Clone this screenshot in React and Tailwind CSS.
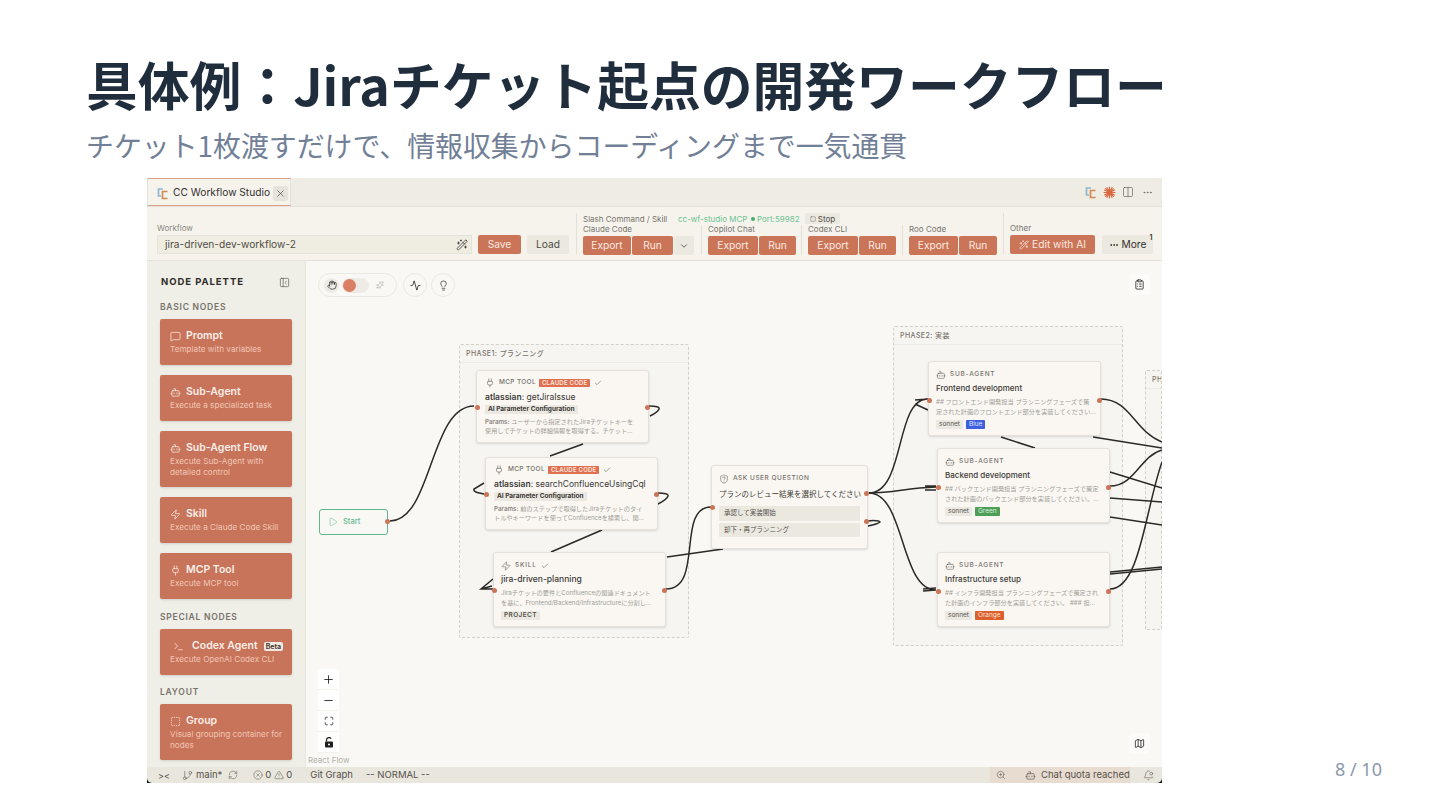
import React from 'react';
import {
  Activity, Bot, Check, ChevronDown, CircleX, ClipboardList, Columns2, Ellipsis, Hand, Lightbulb,
  Map as MapIcon, Maximize, MessageSquare, Minus, PanelLeftClose, Play, Plug, Plus, RefreshCw,
  ShieldQuestion, Sparkles, Square, SquareDashed, Terminal, TriangleAlert, WandSparkles, X, Zap, ZoomIn,
  BellDot, GitBranch,
} from 'lucide-react';

const ui = "font-['Inter','Noto_Sans_CJK_JP',sans-serif]";

const CcLogo = () => (
  <svg width="13" height="13" viewBox="0 0 13 13" fill="none" strokeWidth="1.7">
    <path d="M7 2H2.5v7H5" stroke="#8fb8cf" />
    <path d="M11.5 4.5H6.5v7h5" stroke="#d08a52" />
  </svg>
);

const ClaudeMark = () => (
  <svg width="13" height="13" viewBox="0 0 13 13" stroke="#d9673f" strokeWidth="1.1" strokeLinecap="round">
    <path d="M6.5 1v11M1 6.5h11M2.6 2.6l7.8 7.8M10.4 2.6l-7.8 7.8M4 1.5l5 10M9 1.5l-5 10M1.5 4l10 5M11.5 4l-10 5" />
  </svg>
);

const LockIcon = () => (
  <svg width="10" height="11" viewBox="0 0 10 11">
    <path d="M2.5 4.5V3a2.5 2.5 0 0 1 4.6-1.3" fill="none" stroke="#1f1e1c" strokeWidth="1.2" />
    <rect x="1" y="4.5" width="8" height="6" rx="1" fill="#1f1e1c" />
    <circle cx="5" cy="7.5" r="1" fill="#fff" />
  </svg>
);

const Btn = ({ className = '', children }) => (
  <div className={`flex h-[19px] items-center justify-center rounded-[2px] bg-[#cb7558] text-[10.2px] text-[#fbe9e1] ${className}`}>{children}</div>
);

const ExportRun = ({ label, exportW, runW, className = '' }) => (
  <div className={`flex flex-col ${className}`}>
    <div className="mb-[1px] h-[11px] text-[8px] leading-[11px] text-[#77736c]">{label}</div>
    <div className="flex gap-px">
      <Btn className={exportW}>Export</Btn>
      <Btn className={runW}>Run</Btn>
    </div>
  </div>
);

const Divider = ({ className = '' }) => <div className={`w-px self-stretch bg-[#e4e0d6] ${className}`} />;

const Toolbar = () => (
  <div className="flex h-[54px] border-b border-[#e4e1d8] bg-[#f6f3ed] pl-[10px]">
    <div className="flex w-[315px] flex-col pt-[15px]">
      <div className="h-[13px] text-[8px] leading-[12px] text-[#8a867e]">Workflow</div>
      <div className="flex h-[19px] items-center justify-between border border-[#e6e3d9] bg-[#efece2] pl-[7px] pr-[3px] text-[10.2px] text-[#4f4c46]">
        jira-driven-dev-workflow-2
        <WandSparkles size={12} strokeWidth={1.6} className="text-[#33312d]" />
      </div>
    </div>
    <div className="ml-[6px] mt-[28px] flex gap-[6px]">
      <Btn className="w-[43px]">Save</Btn>
      <div className="flex h-[19px] w-[42px] items-center justify-center rounded-[2px] bg-[#ebe8df] text-[10.2px] text-[#4f4c46]">Load</div>
    </div>
    <Divider className="ml-[7px] mb-[6px] mt-[6px]" />
    <div className="ml-[6px] flex flex-col pt-[6px]">
      <div className="flex h-[11px] items-center whitespace-nowrap text-[8px]">
        <span className="w-[95px] text-[#77736c]">Slash Command / Skill</span>
        <span className="w-[71px] text-[#6cc391]">cc-wf-studio MCP</span>
        <span className="mx-[2px] h-[4px] w-[4px] rounded-full bg-[#3fae70]" />
        <span className="w-[48px] text-[#6cc391]">Port:59982</span>
        <span className="flex h-[11px] w-[35px] items-center justify-center gap-[2px] rounded-[2px] bg-[#ebe8df] text-[#4f4c46]">
          <Square size={6} strokeWidth={1.5} />Stop
        </span>
      </div>
      <div className="flex">
        <ExportRun label="Claude Code" exportW="w-[48px]" runW="w-[41px]" />
        <div className="ml-px mt-[12px] flex h-[19px] w-[20px] items-center justify-center rounded-[2px] bg-[#ebe8df]">
          <ChevronDown size={10} className="text-[#4f4c46]" />
        </div>
        <Divider className="ml-[7px] mt-[1px]" />
        <ExportRun label="Copilot Chat" exportW="w-[50px]" runW="w-[37px]" className="ml-[6px]" />
        <Divider className="ml-[5px] mt-[1px]" />
        <ExportRun label="Codex CLI" exportW="w-[50px]" runW="w-[37px]" className="ml-[6px]" />
        <Divider className="ml-[6px] mt-[1px]" />
        <ExportRun label="Roo Code" exportW="w-[49px]" runW="w-[38px]" className="ml-[6px]" />
      </div>
    </div>
    <Divider className="ml-[6px] mb-[6px] mt-[6px]" />
    <div className="ml-[6px] flex flex-col pt-[16px]">
      <div className="mb-[1px] h-[11px] text-[8px] leading-[11px] text-[#77736c]">Other</div>
      <div className="flex gap-[7px]">
        <Btn className="w-[85px] gap-[3px]"><WandSparkles size={10} strokeWidth={1.7} />Edit with AI</Btn>
        <div className="relative flex h-[19px] w-[51px] items-center justify-center gap-[3px] rounded-[2px] bg-[#ebe8df] text-[10.2px] text-[#33312d]">
          <Ellipsis size={10} strokeWidth={2.4} />More
          <span className="absolute -right-[2px] -top-[1px] flex h-[8px] w-[8px] items-center justify-center text-[7px] font-semibold">1</span>
        </div>
      </div>
    </div>
  </div>
);

const PaletteCard = ({ icon: Icon, title, desc, beta, tall }) => (
  <div className={`rounded-[2px] bg-[#c8745a] pl-[10px] pr-[6px] pt-[10px] shadow-sm ${tall ? 'h-[56px]' : 'h-[46px]'}`}>
    <div className="flex h-[14px] items-center gap-[5px] whitespace-nowrap text-[10.5px] font-semibold text-[#fbeee8]">
      {Icon && <Icon size={11} strokeWidth={1.6} className={beta ? 'ml-[3px] mr-[3px]' : ''} />}
      {title}
      {beta && <span className="ml-[1px] rounded-[2px] bg-[#f4e9e2] px-[2px] text-[7px] font-bold leading-[9px] text-[#4a3a32]">Beta</span>}
    </div>
    <div className="mt-[1px] text-[8.2px] leading-[10.5px] text-[#f0c5b5]">{desc}</div>
  </div>
);

const SectionLabel = ({ className = '', children }) => (
  <div className={`text-[8.5px] font-semibold leading-[12px] tracking-[0.09em] text-[#77736c] ${className}`}>{children}</div>
);

const Palette = () => (
  <div className="flex w-[159px] shrink-0 flex-col border-r border-[#e9e6de] bg-[#efeee7] px-[13px]">
    <div className="mt-[15px] flex h-[12px] items-center justify-between pr-[2px] text-[9.5px] font-bold tracking-[0.1em] text-[#2f2d29]">
      <span className="ml-px">NODE PALETTE</span>
      <PanelLeftClose size={11} strokeWidth={1.4} className="text-[#55524c]" />
    </div>
    <SectionLabel className="mt-[13px]">BASIC NODES</SectionLabel>
    <div className="mt-[6px] flex flex-col gap-[10px]">
      <PaletteCard icon={MessageSquare} title="Prompt" desc="Template with variables" />
      <PaletteCard icon={Bot} title="Sub-Agent" desc="Execute a specialized task" />
      <PaletteCard icon={Bot} title="Sub-Agent Flow" desc="Execute Sub-Agent with detailed control" tall />
      <PaletteCard icon={Zap} title="Skill" desc="Execute a Claude Code Skill" />
      <PaletteCard icon={Plug} title="MCP Tool" desc="Execute MCP tool" />
    </div>
    <SectionLabel className="mt-[12px]">SPECIAL NODES</SectionLabel>
    <div className="mt-[6px]">
      <PaletteCard icon={Terminal} title="Codex Agent" desc="Execute OpenAI Codex CLI" beta />
    </div>
    <SectionLabel className="mt-[11px]">LAYOUT</SectionLabel>
    <div className="mt-[6px]">
      <PaletteCard icon={SquareDashed} title="Group" desc="Visual grouping container for nodes" tall />
    </div>
  </div>
);

const Tag = ({ className = 'bg-[#ebe8e1] text-[#55524c]', children }) => (
  <span className={`rounded-[1px] px-[3px] text-[6.5px] leading-[9px] ${className}`}>{children}</span>
);

const Dot = ({ className }) => <span className={`absolute h-[5px] w-[5px] rounded-full bg-[#cb7558] ${className}`} />;

const NodeHead = ({ icon: Icon, label, badge, check, tracking = 'tracking-[0.05em]' }) => (
  <div className="flex h-[10px] items-center gap-[3px]">
    <Icon size={10} strokeWidth={1.3} className="text-[#55524c]" />
    <span className={`ml-[1px] text-[6.5px] font-medium text-[#77736c] ${tracking}`}>{label}</span>
    {badge && <span className="rounded-[1px] bg-[#df6f4e] px-[3px] text-[6px] font-semibold leading-[8px] tracking-[0.04em] text-[#fbe9e1]">CLAUDE CODE</span>}
    {check && <Check size={8} strokeWidth={1.8} className="ml-[1px] text-[#4f6f52]" />}
  </div>
);

const McpNode = ({ pos, tool, line1, line2 }) => (
  <div className={`absolute h-[73px] w-[173px] rounded-[3px] border border-[#e5e1da] bg-[#faf7f3] px-[8px] pt-[7px] shadow-sm ${pos}`}>
    <NodeHead icon={Plug} label="MCP TOOL" badge check />
    <div className="mt-[4px] text-[8.5px] leading-[11px] text-[#3c3a36]"><b className="font-semibold">atlassian</b>: {tool}</div>
    <div className="mt-[2px] flex"><Tag className="bg-[#ebe8e1] font-bold text-[#3c3a36]">AI Parameter Configuration</Tag></div>
    <div className="mt-[3px] whitespace-nowrap text-[6.2px] leading-[9px] text-[#a09d95]"><b className="font-semibold text-[#8a867e]">Params:</b> {line1}<br />{line2}</div>
    <Dot className="-left-[2px] top-[34px]" />
    <Dot className="-right-[2px] top-[34px]" />
  </div>
);

const AgentNode = ({ pos, title, line1, line2, tag, tagClass }) => (
  <div className={`absolute h-[75px] w-[173px] rounded-[3px] border border-[#e5e1da] bg-[#faf7f3] px-[7px] pt-[8px] shadow-sm ${pos}`}>
    <NodeHead icon={Bot} label="SUB-AGENT" tracking="tracking-[0.12em]" />
    <div className="mt-[3px] text-[8px] font-medium leading-[11px] text-[#3c3a36]">{title}</div>
    <div className="mt-[3px] whitespace-nowrap text-[6.2px] leading-[9.5px] text-[#a09d95]">{line1}<br />{line2}</div>
    <div className="mt-[4px] flex gap-[3px]"><Tag>sonnet</Tag><Tag className={tagClass}>{tag}</Tag></div>
    <Dot className="-left-[2px] top-[36px]" />
    <Dot className="-right-[2px] top-[36px]" />
  </div>
);

const Group = ({ pos, label }) => (
  <div className={`absolute rounded-[2px] border border-dashed border-[#d3d0c8] bg-[#f7f5f1] ${pos}`}>
    <div className="h-[18px] whitespace-nowrap border-b border-[#eeebe5] pl-[6px] text-[7px] font-medium leading-[18px] tracking-[0.06em] text-[#77736c]">{label}</div>
  </div>
);

const ControlBtn = ({ children }) => (
  <div className="flex h-[21px] w-[21px] items-center justify-center border-b border-[#f3f1ec] bg-white text-[#1f1e1c]">{children}</div>
);

const Edges = () => (
  <svg className="absolute inset-0 h-full w-full" viewBox="306 261 856 506" fill="none" stroke="#2b2a27" strokeWidth="1.5">
    <path d="M390 521C432 521 430 406 474 406" />
    <path d="M649 406C656 406 660 407 659 409C658 412 654 414 650 416" />
    <path d="M583 444L550 456" />
    <path d="M484 483L474 489C473 492 478 493 484 494" />
    <path d="M658 493C664 493 669 494 668 496C667 499 662 502 658 504" />
    <path d="M602 530L551 552" />
    <path d="M493 579L481 589L493 589M481 589L492 586" />
    <path d="M666 589C704 589 676 507 711 507" />
    <path d="M667 557L723 549" />
    <path d="M868 521C874 520 880 521 880 522C878 524 873 525 868 526" />
    <path d="M869 493C905 493 895 400 927 399M915 400L928 399M915 404L928 410" />
    <path d="M869 493C895 493 905 488 936 487M925 486L936 486M925 490L936 490" />
    <path d="M869 493C905 493 900 590 936 590M923 589L936 588M923 591L936 590" />
    <path d="M1101 399C1130 399 1135 432 1162 442" />
    <path d="M1093 437L1162 448" />
    <path d="M1001 437L1035 448" />
    <path d="M1110 486C1135 486 1140 456 1162 450" />
    <path d="M1110 472L1162 488" />
    <path d="M1110 498L1162 502" />
    <path d="M1110 517L1162 525" />
    <path d="M1110 572L1162 567M1110 574L1162 569" />
    <path d="M1110 589C1140 589 1145 510 1162 462" />
  </svg>
);

const Canvas = () => (
  <div className="relative flex-1 overflow-hidden bg-[#faf8f5]">
    <Group pos="left-[153px] top-[83px] h-[294px] w-[230px]" label="PHASE1: プランニング" />
    <Group pos="left-[587px] top-[65px] h-[320px] w-[230px]" label="PHASE2: 実装" />
    <Group pos="left-[839px] top-[109px] h-[260px] w-[17px] overflow-hidden" label="PH" />
    <Edges />

    <div className="absolute left-[12px] top-[12px] flex h-[24px] w-[79px] items-center rounded-full border border-[#ebe8e1] pl-[5px]">
      <span className="flex h-[15px] w-[15px] items-center justify-center rounded-full bg-[#eeebe4]"><Hand size={10} strokeWidth={1.4} /></span>
      <span className="ml-[3px] flex h-[15px] w-[27px] items-center rounded-full bg-[#eeebe4] pl-px">
        <span className="h-[13px] w-[13px] rounded-full bg-[#db7f64]" />
      </span>
      <Sparkles size={8} strokeWidth={1.2} className="ml-[7px] text-[#9b9890]" />
    </div>
    <div className="absolute left-[97px] top-[12px] flex h-[24px] w-[24px] items-center justify-center rounded-full border border-[#ebe8e1]"><Activity size={11} strokeWidth={1.5} /></div>
    <div className="absolute left-[125px] top-[12px] flex h-[24px] w-[24px] items-center justify-center rounded-full border border-[#ebe8e1]"><Lightbulb size={11} strokeWidth={1.3} /></div>
    <div className="absolute left-[823px] top-[13px] flex h-[21px] w-[21px] items-center justify-center rounded-[2px] bg-[#fcfbf9]"><ClipboardList size={11} strokeWidth={1.5} /></div>

    <div className="absolute left-[13px] top-[248px] flex h-[26px] w-[69px] items-center gap-[5px] rounded-[3px] border-[1.5px] border-[#5fb98f] bg-[#faf8f5] pl-[8px] text-[7.5px] font-medium text-[#5fb98f]">
      <Play size={10} strokeWidth={1.3} />Start
      <Dot className="-right-[3px] top-[9px]" />
    </div>

    <McpNode pos="left-[170px] top-[109px]" tool="getJiraIssue" line1="ユーザーから指定されたJiraチケットキーを" line2="使用してチケットの詳細情報を取得する。チケット..." />
    <McpNode pos="left-[179px] top-[196px]" tool="searchConfluenceUsingCql" line1="前のステップで取得したJiraチケットのタイ" line2="トルやキーワードを使ってConfluenceを検索し、関..." />

    <div className="absolute left-[187px] top-[291px] h-[75px] w-[173px] rounded-[3px] border border-[#e5e1da] bg-[#faf7f3] px-[7px] pt-[8px] shadow-sm">
      <NodeHead icon={Zap} label="SKILL" check tracking="tracking-[0.12em]" />
      <div className="mt-[3px] text-[8.5px] font-medium leading-[11px] text-[#3c3a36]">jira-driven-planning</div>
      <div className="mt-[3px] whitespace-nowrap text-[6.2px] leading-[9.5px] text-[#a09d95]">Jiraチケットの要件とConfluenceの関連ドキュメント<br />を基に、Frontend/Backend/Infrastructureに分割し...</div>
      <div className="mt-[4px] flex"><Tag className="bg-[#ebe8e1] font-semibold tracking-[0.06em] text-[#55524c]">PROJECT</Tag></div>
      <Dot className="-left-[2px] top-[35px]" />
      <Dot className="-right-[2px] top-[35px]" />
    </div>

    <div className="absolute left-[405px] top-[204px] h-[84px] w-[157px] rounded-[3px] border border-[#e5e1da] bg-[#faf7f3] px-[7px] pt-[8px] shadow-sm">
      <div className="flex h-[10px] items-center gap-[4px]">
        <ShieldQuestion size={10} strokeWidth={1.3} className="text-[#55524c]" />
        <span className="text-[6.5px] font-medium tracking-[0.08em] text-[#77736c]">ASK USER QUESTION</span>
      </div>
      <div className="mt-[5px] whitespace-nowrap text-[7.5px] leading-[11px] text-[#3c3a36]">プランのレビュー結果を選択してください</div>
      <div className="mt-[6px] h-[15px] rounded-[1px] bg-[#ebe8e0] pl-[5px] text-[6.5px] leading-[15px] text-[#55524c]">承認して実装開始</div>
      <div className="mt-[2px] h-[14px] rounded-[1px] bg-[#ebe8e0] pl-[5px] text-[6.5px] leading-[14px] text-[#55524c]">却下・再プランニング</div>
      <Dot className="-left-[2px] top-[39px]" />
      <Dot className="-right-[2px] top-[25px]" />
      <Dot className="-right-[2px] top-[53px]" />
    </div>

    <AgentNode pos="left-[622px] top-[100px]" title="Frontend development" line1="## フロントエンド開発担当 プランニングフェーズで策" line2="定された計画のフロントエンド部分を実装してください..." tag="Blue" tagClass="bg-[#3f5fe0] text-[#dfe5fb]" />
    <AgentNode pos="left-[631px] top-[187px]" title="Backend development" line1="## バックエンド開発担当 プランニングフェーズで策定" line2="された計画のバックエンド部分を実装してください。..." tag="Green" tagClass="bg-[#4e9e57] text-[#dff0e0]" />
    <AgentNode pos="left-[631px] top-[291px]" title="Infrastructure setup" line1="## インフラ開発担当 プランニングフェーズで策定され" line2="た計画のインフラ部分を実装してください。 ### 担..." tag="Orange" tagClass="bg-[#dd5f2b] text-[#fbe5da]" />

    <div className="absolute left-[12px] top-[408px] flex flex-col">
      <ControlBtn><Plus size={13} strokeWidth={1.6} /></ControlBtn>
      <ControlBtn><Minus size={13} strokeWidth={1.6} /></ControlBtn>
      <ControlBtn><Maximize size={10} strokeWidth={1.8} /></ControlBtn>
      <ControlBtn><LockIcon /></ControlBtn>
    </div>
    <div className="absolute left-[2px] top-[494px] text-[8px] leading-[10px] text-[#b3b0a8]">React Flow</div>
    <div className="absolute left-[823px] top-[472px] flex h-[21px] w-[21px] items-center justify-center rounded-[2px] bg-[#fcfbf9]"><MapIcon size={11} strokeWidth={1.5} /></div>
  </div>
);

const StatusBar = () => (
  <div className="flex h-[16px] items-center rounded-b-[5px] bg-[#e9e6dd] text-[9.5px] text-[#55524c]">
    <span className="ml-[11px] w-[15px] text-[9px] leading-none">&gt;&lt;</span>
    <GitBranch size={11} strokeWidth={1.2} className="ml-[9px]" />
    <span className="ml-[3px]">main*</span>
    <RefreshCw size={10} strokeWidth={1.2} className="ml-[6px]" />
    <CircleX size={10} strokeWidth={1.2} className="ml-[15px]" />
    <span className="ml-[2px]">0</span>
    <TriangleAlert size={10} strokeWidth={1.2} className="ml-[3px]" />
    <span className="ml-[2px]">0</span>
    <span className="ml-[18px]">Git Graph</span>
    <span className="ml-[13px]">-- NORMAL --</span>
    <div className="ml-auto flex h-full w-[140px] items-center bg-[#e8dcd0] pl-[6px]">
      <ZoomIn size={10} strokeWidth={1.2} />
      <Bot size={11} strokeWidth={1.4} className="ml-[19px]" />
      <span className="ml-[5px] whitespace-nowrap">Chat quota reached</span>
    </div>
    <BellDot size={11} strokeWidth={1.2} className="ml-[13px] mr-[8px]" />
  </div>
);

export default function App() {
  return (
    <div className="relative h-[810px] w-[1440px] overflow-hidden bg-white font-['Noto_Sans_CJK_JP',sans-serif]">
      <div className="px-[86px] pt-[49px]">
        <h1 className="h-[70px] whitespace-nowrap text-[51.8px] font-bold leading-[70px] text-[#1f2d3d]">具体例：Jiraチケット起点の開発ワークフロー</h1>
        <p className="mt-[6px] h-[40px] whitespace-nowrap text-[27.9px] leading-[40px] text-[#718096]">チケット1枚渡すだけで、情報収集からコーディングまで一気通貫</p>
        <div className={`ml-[61px] mt-[13px] flex h-[605px] w-[1015px] flex-col overflow-hidden bg-[#111] ${ui}`}>
          <div className="flex h-[29px] items-stretch justify-between border-b border-[#e4e1d8] bg-[#efece4]">
            <div className="flex w-[144px] items-center border-x border-t border-[#d9a08c] border-x-[#e4e1d8] border-b border-b-[#d9a08c] bg-[#f6f3ed] pl-[8px] pt-[2px] text-[10.2px] text-[#33312d]">
              <CcLogo />
              <span className="ml-[4px] whitespace-nowrap">CC Workflow Studio</span>
              <span className="ml-[3px] flex h-[15px] w-[15px] items-center justify-center rounded-[2px] bg-[#e6e3da]"><X size={11} strokeWidth={1.3} /></span>
            </div>
            <div className="flex items-center gap-[6px] pr-[9px] text-[#55524c]">
              <CcLogo />
              <ClaudeMark />
              <Columns2 size={12} strokeWidth={1.2} />
              <Ellipsis size={11} strokeWidth={1.3} className="ml-[2px]" />
            </div>
          </div>
          <Toolbar />
          <div className="flex h-[506px]">
            <Palette />
            <Canvas />
          </div>
          <StatusBar />
        </div>
      </div>
      <div className="absolute left-[1335px] top-[756px] font-['Noto_Sans',sans-serif] text-[18px] leading-[26px] text-[#8d99ab]">8 / 10</div>
    </div>
  );
}
